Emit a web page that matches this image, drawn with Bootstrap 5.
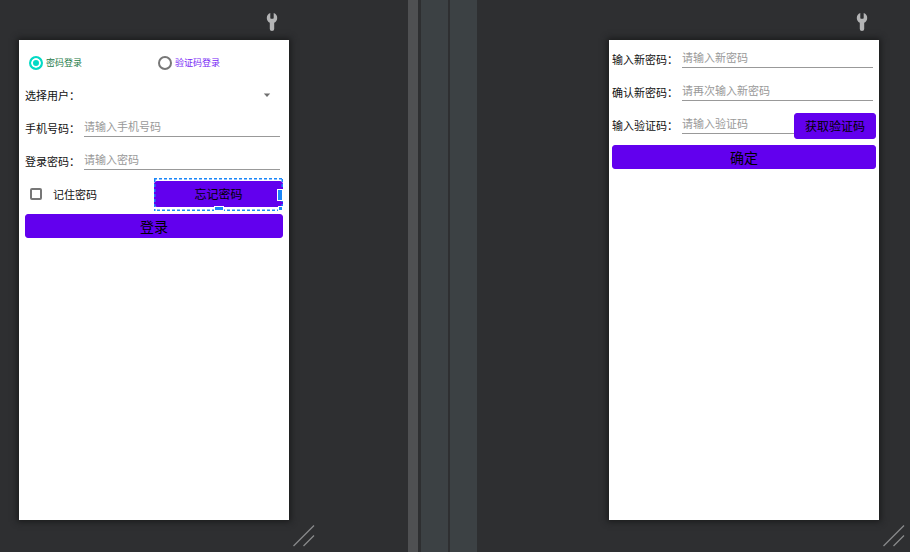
<!DOCTYPE html>
<html lang="zh-CN">
<head>
<meta charset="utf-8">
<meta name="viewport" content="width=device-width, initial-scale=1">
<title>登录</title>
<link href="https://cdn.jsdelivr.net/npm/bootstrap@5.3.0/dist/css/bootstrap.min.css" rel="stylesheet">
<style>
body{background:#2e2f31;font-family:"Noto Sans CJK SC","Noto Sans",sans-serif;font-size:11px;line-height:16px;color:#111}
.pane-start{flex:60 1 0;padding-left:19px}
.pane-end{flex:62 1 0;padding-right:31px}
.divider{background:#3c4144}
.scroll-track{width:10px;background:#4f5052;margin-right:3px}
.strip{width:27px;margin-right:2px}
.strip-last{width:27px}
.preview{width:calc((100vh - 72px) * 9 / 16);min-width:240px}
.tool-row{height:40px;padding:13px 11px 0 0}
.device{aspect-ratio:9/16;box-shadow:0 0 6px 2px #1b1c1d}
.grip{left:calc(100% + 4px);top:5px}
.form-login{padding:6px}
.form-reset{padding:3px}
.line{height:33px}
.line label,.remember{padding-bottom:2px}
.line .mode-on,.line .mode-off{padding-bottom:0}
.label-s{width:59px}
.label-m{width:70px}
.inset{padding-right:3px}
.field{border:0;border-bottom:1px solid #999;border-radius:0;background:transparent;height:18px;padding:0 0 3px;margin-bottom:2px;font-size:11px;line-height:14px;min-width:0;color:#111}
.field::placeholder{color:#999;opacity:1}
.field:focus{outline:0;border-color:#03dac5}
.mode{font-size:9px}
.mode-on{color:#1d7a48}
.mode-off{color:#7726f5}
.ring{appearance:none;width:14px;height:14px;border:2px solid #777;border-radius:50%;margin:0 3px 0 0;background:#fff}
.ring:checked{border-color:#03dac5;background:#03dac5;box-shadow:inset 0 0 0 2px #fff}
.tick{appearance:none;width:12px;height:12px;border:2px solid #777;border-radius:2px;margin:0 11px 0 5px}
.tick:checked{background:#03dac5}
.user-select{appearance:none;border:0;background:transparent;height:24px}
.caret{right:12px;top:10px}
.act{--bs-btn-bg:#6200ee;--bs-btn-color:#000;--bs-btn-border-color:#6200ee;--bs-btn-hover-bg:#5500d0;--bs-btn-hover-color:#000;--bs-btn-active-bg:#4b00b8;--bs-btn-padding-x:10px;--bs-btn-padding-y:0;--bs-btn-border-radius:3px;--bs-btn-font-size:12px;--bs-btn-line-height:24px}
.act-main{--bs-btn-font-size:14px;--bs-btn-line-height:22px;margin-top:3px}
.picked{height:33px;padding:3px 0}
.outline-box{inset:0;pointer-events:none}
.knob{background:#1a86f8;border:1px solid #fff}
.knob-side{width:6px;height:12px;right:0;top:11px}
.knob-base{width:10px;height:5px;left:calc(50% - 5px);bottom:0}
.knob-corner{width:5px;height:5px;right:0;bottom:0}
</style>
<script src="https://cdn.jsdelivr.net/npm/bootstrap@5.3.0/dist/js/bootstrap.bundle.min.js"></script>
</head>
<body>
<main class="d-flex min-vh-100">
  <section class="pane-start d-flex justify-content-start align-items-start" aria-label="登录">
    <div class="preview">
      <div class="tool-row d-flex justify-content-end">
        <svg width="12" height="18" viewBox="0 0 12 18" aria-hidden="true"><path fill="#b3b4b5" d="M4.3.1V4.800Q4.300 5.800 5 5.800H7Q7.700 5.800 7.700 4.800V.1Q11.200 1.500 11.200 5Q11.200 8.300 8.200 9.800V16Q8.200 17.900 6 17.900Q3.800 17.900 3.800 16V9.800Q.8 8.300.8 5Q.8 1.500 4.300.1Z"/></svg>
      </div>
      <div class="device bg-white">
        <form class="form-login">
          <div class="row g-0 line align-items-center mode">
            <label class="col-6 d-flex align-items-center mode-on ps-1"><input class="ring" type="radio" name="mode" checked>密码登录</label>
            <label class="col-6 d-flex align-items-center mode-off ps-1"><input class="ring" type="radio" name="mode">验证码登录</label>
          </div>
          <div class="line d-flex align-items-center position-relative">
            <label class="label-s" for="user">选择用户：</label>
            <select class="user-select flex-grow-1" id="user"><option></option></select>
            <svg class="caret position-absolute" width="8" height="12" viewBox="0 0 8 12" aria-hidden="true"><path fill="#707070" d="M.8 4.500H7.200L4 8Z"/></svg>
          </div>
          <div class="line inset d-flex align-items-center">
            <label class="label-s" for="phone">手机号码：</label>
            <input class="field flex-grow-1" id="phone" type="tel" placeholder="请输入手机号码">
          </div>
          <div class="line inset d-flex align-items-center">
            <label class="label-s" for="pass">登录密码：</label>
            <input class="field flex-grow-1" id="pass" type="password" placeholder="请输入密码">
          </div>
          <div class="row g-0 align-items-center">
            <label class="col-6 d-flex align-items-center remember"><input class="tick" type="checkbox">记住密码</label>
            <div class="col-6 picked position-relative">
              <button class="btn act w-100" type="button">忘记密码</button>
              <svg class="outline-box position-absolute w-100 h-100" aria-hidden="true"><rect width="100%" height="100%" fill="none" stroke="#1a86f8" stroke-width="3" stroke-dasharray="3 2"/></svg>
              <span class="knob knob-side position-absolute"></span>
              <span class="knob knob-base position-absolute"></span>
              <span class="knob knob-corner position-absolute"></span>
            </div>
          </div>
          <button class="btn act act-main w-100" type="submit">登录</button>
        </form>
      </div>
      <div class="position-relative"><svg class="grip position-absolute" width="22" height="22" viewBox="0 0 22 22" aria-hidden="true"><path fill="none" stroke="#88898a" stroke-width="1.300" d="M.5 21L21 .5M10.500 21L21 10.500"/></svg></div>
    </div>
  </section>
  <div class="scroll-track"></div>
  <div class="divider strip"></div>
  <div class="divider strip-last"></div>
  <section class="pane-end d-flex justify-content-end align-items-start" aria-label="重置密码">
    <div class="preview">
      <div class="tool-row d-flex justify-content-end">
        <svg width="12" height="18" viewBox="0 0 12 18" aria-hidden="true"><path fill="#b3b4b5" d="M4.3.1V4.800Q4.300 5.800 5 5.800H7Q7.700 5.800 7.700 4.800V.1Q11.200 1.500 11.200 5Q11.200 8.300 8.200 9.800V16Q8.200 17.900 6 17.900Q3.800 17.900 3.800 16V9.800Q.8 8.300.8 5Q.8 1.500 4.300.1Z"/></svg>
      </div>
      <div class="device bg-white">
        <form class="form-reset">
          <div class="line inset d-flex align-items-center">
            <label class="label-m" for="new1">输入新密码：</label>
            <input class="field flex-grow-1" id="new1" type="password" placeholder="请输入新密码">
          </div>
          <div class="line inset d-flex align-items-center">
            <label class="label-m" for="new2">确认新密码：</label>
            <input class="field flex-grow-1" id="new2" type="password" placeholder="请再次输入新密码">
          </div>
          <div class="line d-flex align-items-center">
            <label class="label-m flex-shrink-0" for="code">输入验证码：</label>
            <input class="field flex-grow-1" id="code" type="text" placeholder="请输入验证码">
            <button class="btn act flex-shrink-0" type="button">获取验证码</button>
          </div>
          <button class="btn act act-main w-100" type="submit">确定</button>
        </form>
      </div>
      <div class="position-relative"><svg class="grip position-absolute" width="22" height="22" viewBox="0 0 22 22" aria-hidden="true"><path fill="none" stroke="#88898a" stroke-width="1.300" d="M.5 21L21 .5M10.500 21L21 10.500"/></svg></div>
    </div>
  </section>
</main>
</body>
</html>
